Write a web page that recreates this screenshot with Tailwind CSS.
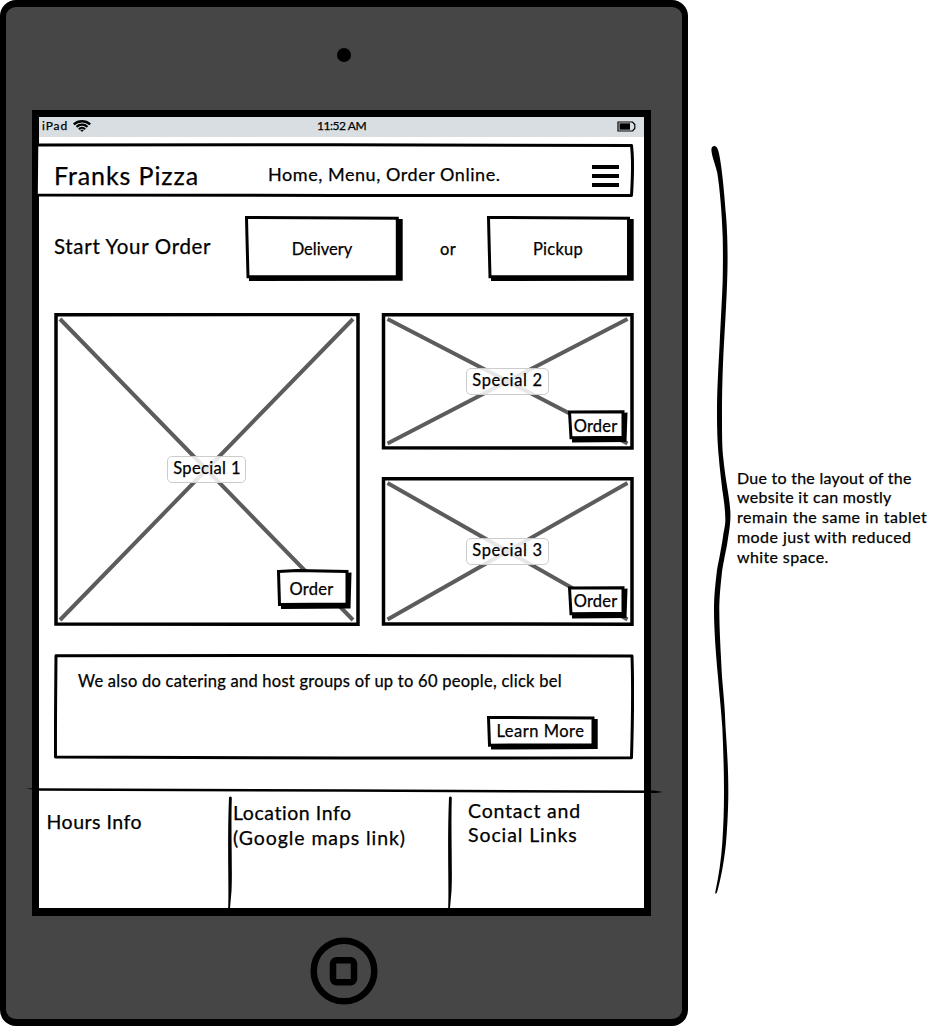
<!DOCTYPE html>
<html lang="en">
<head>
<meta charset="utf-8">
<title>Franks Pizza – tablet wireframe</title>
<script src="https://cdn.jsdelivr.net/npm/@tailwindcss/browser@4"></script>
</head>
<body class="flex h-[1032px] w-[936px] overflow-hidden bg-white font-[Lato,'Open_Sans',sans-serif] text-black [-webkit-text-stroke:0.25px_black]">

<!-- Tablet -->
<div class="flex h-[1026px] w-[688px] shrink-0 flex-col rounded-[16px] border-x-6 border-y-7 border-black bg-[#464646]">
  <div class="flex h-[103px] shrink-0 items-center justify-center pb-[7px]">
    <div class="size-[14px] rounded-full bg-black"></div>
  </div>

  <!-- Screen -->
  <main class="ml-[26px] flex h-[806px] w-[619px] shrink-0 flex-col border-t-7 border-r-7 border-b-8 border-l-7 border-black bg-white">
    <div class="grid h-5 shrink-0 grid-cols-3 items-center bg-[#d8dee2] pr-2 pl-[3px] text-[12px] leading-[16px]">
      <div class="flex items-center gap-[5px] pb-[2px]">
        <span class="tracking-[0.88px]">iPad</span>
        <svg class="h-3 w-[18px]" viewBox="0 0 18 12" fill="none" stroke="#000"><path d="M.8 4.300C5.500 .2 12.500 .2 17.200 4.300" stroke-width="2.400"/><path d="M3.500 6.800C6.700 4 11.300 4 14.500 6.800" stroke-width="2.200"/><path d="M5.800 9.100C7.800 7.400 10.200 7.400 12.200 9.100" stroke-width="2.100"/><path d="M7 9.800H11L9 12Z" fill="#000" stroke="none"/></svg>
      </div>
      <span class="pb-[2px] pl-[5px] text-center tracking-[-0.45px] whitespace-nowrap">11:52 AM</span>
      <svg class="mb-[2px] ml-auto h-[11px] w-[19px]" viewBox="0 0 19 11"><path d="M1 1H15.500L17.800 3.500V7.500L15.500 10H1Z" fill="none" stroke="#000" stroke-width="1.200"/><rect x="2.500" y="2.300" width="10.500" height="6.400"/></svg>
    </div>

    <!-- Site header -->
    <header class="relative mt-[6px] -ml-[3px] flex h-[54px] w-[598px] shrink-0 items-center pt-[9px] pl-[18px]">
      <svg class="absolute inset-0 h-[54px] w-[598px]" viewBox="0 0 598 54"><path d="M.8 2L300 1.800L595.500 2.500C597 15 596.500 36 595.500 52.500L300 52.500L.3 52Z" fill="#fff" stroke="#000" stroke-width="3" stroke-linejoin="round"/></svg>
      <h1 class="relative w-[214px] text-[25px] leading-[30px] tracking-[0.9px] whitespace-nowrap">Franks Pizza</h1>
      <nav class="relative mb-[2px] w-[324px] text-[18px] leading-[24px] tracking-[0.55px] whitespace-nowrap">Home, Menu, Order Online.</nav>
      <div class="relative mt-[3px] flex w-[27px] flex-col gap-[5px]">
        <i class="h-[4px] bg-black"></i><i class="h-[4px] bg-black"></i><i class="h-[4px] bg-black"></i>
      </div>
    </header>

    <!-- Start order -->
    <section class="mt-[19px] flex h-[65px] shrink-0 items-center pl-[15px] text-[16.5px] leading-[20px]">
      <h2 class="mb-[6px] w-[191px] text-[20.5px] leading-[26px] tracking-[0.68px] whitespace-nowrap">Start Your Order</h2>
      <button class="relative h-[65px] w-[158px] pr-[4px] tracking-[0.03px]">
        <svg class="absolute inset-0" width="158" height="65" viewBox="0 0 158 65"><path d="M4 59H151.500V3H157.700V64.700L4 65Z"/><path d="M1.500 1.500L60 1.700L152.300 2.200V60.400L3 60.800C2.500 45 2 22 1.500 1.500Z" fill="#fff" stroke="#000" stroke-width="3"/></svg>
        <span class="relative">Delivery</span>
      </button>
      <span class="w-[84px] pt-[1px] pl-[37px] tracking-[0.31px]">or</span>
      <button class="relative h-[65px] w-[147px] pr-[5px] tracking-[0.24px]">
        <svg class="absolute inset-0" width="147" height="65" viewBox="0 0 147 65"><path d="M4 59H140V3H146.700V64.700L4 65Z"/><path d="M1.500 1.500L60 1.700L141.500 2.200V60.400L3 60.800C2.500 45 2 22 1.500 1.500Z" fill="#fff" stroke="#000" stroke-width="3"/></svg>
        <span class="relative">Pickup</span>
      </button>
    </section>

    <!-- Specials -->
    <section class="mt-[32px] ml-[15px] grid h-[313px] w-[580px] shrink-0 grid-cols-[306px_253px] justify-between text-[16.5px] leading-[20px]">
      <article class="relative flex h-[313px] items-center justify-center">
        <svg class="absolute inset-0" width="306" height="313" viewBox="0 0 306 313"><path d="M6 6L299 307M299 6L6 307" stroke="#5c5c5e" stroke-width="4"/><path d="M2 1.800L304 1.500L304 311.300L2 311Z" fill="none" stroke="#000" stroke-width="3.500"/></svg>
        <span class="relative mr-[1px] flex h-[26.500px] w-[79px] items-center justify-center rounded-[5px] border border-[#ccc] bg-white/85 pb-[3px] pl-[1px] tracking-[0.36px]">Special 1</span>
        <button class="absolute top-[256px] left-[223px] h-[40px] w-[75px] pr-[6px] pb-[1px] tracking-[0.26px]">
          <svg class="absolute inset-0" width="75" height="40" viewBox="0 0 75 40"><path d="M4 34H68V4L74.500 3.500L73.500 39.500L4 40Z"/><path d="M1.500 2.500L20 1.500L70 2.500V35L2.500 35.500Z" fill="#fff" stroke="#000" stroke-width="3"/></svg>
          <span class="relative">Order</span>
        </button>
      </article>
      <div class="flex flex-col justify-between">
        <article class="relative flex h-[136.500px] items-center justify-center">
          <svg class="absolute inset-0" width="253" height="137" viewBox="0 0 253 137"><path d="M6.500 6L246.500 130.500M246.500 6L6.500 130.500" stroke="#5c5c5e" stroke-width="4"/><path d="M2.500 1.800L251 1.500L251 135L2.500 134.800Z" fill="none" stroke="#000" stroke-width="3.500"/></svg>
          <span class="relative flex h-[26.500px] w-[83px] items-center justify-center rounded-[5px] border border-[#ccc] bg-white/85 pb-[3px] tracking-[0.68px]">Special 2</span>
          <button class="absolute top-[97px] left-[187px] h-[33px] w-[60px] pr-[5px] pb-[2px] tracking-[0.2px]">
            <svg class="absolute inset-0" width="60" height="33" viewBox="0 0 60 33"><path d="M4 27H53V3L59.500 2.500L58.500 32L4 32.500Z"/><path d="M1.500 2L55 1.800V27.300L3 27.800Z" fill="#fff" stroke="#000" stroke-width="3"/></svg>
            <span class="relative">Order</span>
          </button>
        </article>
        <article class="relative flex h-[149px] items-center justify-center">
          <svg class="absolute inset-0" width="253" height="149" viewBox="0 0 253 149"><path d="M6.500 6L246.500 142.500M246.500 6L6.500 142.500" stroke="#5c5c5e" stroke-width="4"/><path d="M2.500 1.800L251 1.500L251 147.200L2.500 147Z" fill="none" stroke="#000" stroke-width="3.500"/></svg>
          <span class="relative flex h-[26.500px] w-[83px] items-center justify-center rounded-[5px] border border-[#ccc] bg-white/85 pb-[3px] tracking-[0.68px]">Special 3</span>
          <button class="absolute top-[108.500px] left-[187px] h-[33px] w-[60px] pr-[5px] pb-[2px] tracking-[0.2px]">
            <svg class="absolute inset-0" width="60" height="33" viewBox="0 0 60 33"><path d="M4 27H53V3L59.500 2.500L58.500 32L4 32.500Z"/><path d="M1.500 2L55 1.800V27.300L3 27.800Z" fill="#fff" stroke="#000" stroke-width="3"/></svg>
            <span class="relative">Order</span>
          </button>
        </article>
      </div>
    </section>

    <!-- Catering -->
    <section class="relative mt-[28px] ml-[15px] flex h-[106px] w-[580px] shrink-0 flex-col pt-[16.500px] pl-[24px] text-[16.5px] leading-[20px]">
      <svg class="absolute inset-0" width="580" height="106" viewBox="0 0 580 106"><path d="M2 1.700L290 1.500L578 2C579 30 578.500 70 577.500 103.800L290 104L1.500 103C1.300 70 1.700 40 2 1.700Z" fill="none" stroke="#000" stroke-width="3" stroke-linejoin="round"/></svg>
      <p class="tracking-[0.26px] whitespace-nowrap">We also do catering and host groups of up to 60 people, click bel</p>
      <button class="relative mt-[25px] ml-[409px] h-[34px] w-[111px] pr-[4px] pb-[3px] tracking-[0.5px] whitespace-nowrap">
        <svg class="absolute inset-0" width="111" height="34" viewBox="0 0 111 34"><path d="M4 28H105V3H110.700V33L4 33.500Z"/><path d="M1.500 1.500L106 2V28.700L2.500 29.200Z" fill="#fff" stroke="#000" stroke-width="3"/></svg>
        <span class="relative">Learn More</span>
      </button>
    </section>

    <!-- Footer -->
    <svg class="relative mt-[27px] -ml-[13px] h-[7px] w-[637px] shrink-0" viewBox="0 0 637 7"><path d="M0 1.500L8 1.300L320 2.200L628 3.500L637 5L630 6L320 4.800L14 3.800Z"/></svg>
    <footer class="flex min-h-0 flex-1 text-[19.5px] leading-[25px] whitespace-nowrap">
      <div class="w-[189px] pt-[14.500px] pl-[7.500px] tracking-[0.5px]">Hours Info</div>
      <svg class="mt-[2px] h-[112px] w-[5px] shrink-0" viewBox="0 0 5 112"><path d="M1 1.500Q2.500 -.3 3.800 1.500C2.800 35 4.600 75 3.500 95L2 112H.2C1 85 -.9 50 1 1.500Z"/></svg>
      <div class="w-[215px] pt-[6px]"><span class="block tracking-[0.55px]">Location Info</span><span class="block tracking-[0.92px]">(Google maps link)</span></div>
      <svg class="mt-[2px] h-[112px] w-[5px] shrink-0" viewBox="0 0 5 112"><path d="M1 1.500Q2.500 -.3 3.800 1.500C2.800 35 4.600 75 3.500 95L2 112H.2C1 85 -.9 50 1 1.500Z"/></svg>
      <div class="pt-[5px] pl-[15px] leading-[24px]"><span class="block tracking-[0.81px]">Contact and</span><span class="block tracking-[0.9px]">Social Links</span></div>
    </footer>
  </main>

  <!-- Home button -->
  <div class="flex flex-1 justify-center pt-[21px]">
    <svg class="size-[68px]" viewBox="0 0 68 68" fill="none" stroke="#000"><circle cx="34" cy="34" r="30.300" stroke-width="6.500"/><rect x="23" y="23.200" width="21" height="22" rx="3.500" stroke-width="6.500"/></svg>
  </div>
</div>

<!-- Brace and note -->
<svg class="mt-[140px] ml-[17px] h-[760px] w-[30px] shrink-0" viewBox="705 140 30 760"><path d="M711.500 151C711 147 713 146 714.500 146C717 146 718.500 150 719.500 156C722 168 724.500 195 726 215C728 240 727.800 265 727 285C726 310 725 325 724 343C722.500 370 722 395 722 413C722 435 722 448 723.500 460C725 475 727 485 728 492C730 505 730.800 512 730.300 520C730 527 728.500 535 727 545C725 555 723 565 722 572C720 590 719.300 600 719.300 610C719.500 635 721 655 722 677C724 700 725 710 725.500 727C727.500 755 728.500 775 728.300 797C728 815 727 832 726 843C724 862 721 878 717 892.500L715.500 894L715.300 892C719 875 721 860 722.300 843C723.500 825 724 810 724 793C724 770 723.300 750 722.300 727C721 708 719 690 718 677C716 655 714 630 714 610C714 595 715.500 583 717 570C718.500 562 722 545 723.500 533C725 526 725.500 522 725.300 518C725 507 723.500 498 722.300 490C721 478 719.500 467 718.800 457C717.500 443 717 430 717 413C717 390 718.500 365 719.700 343C720.500 325 722 300 722.700 280C723 265 723 250 722.700 237C722 215 720 190 717.300 173C715 163 712 157 711.500 151Z"/></svg>
<p class="mt-[467.500px] ml-[2px] text-[16px] leading-[19.8px] whitespace-nowrap">
  <span class="block tracking-[0.26px]">Due to the layout of the</span>
  <span class="block tracking-[0.31px]">website it can mostly</span>
  <span class="block tracking-[0.53px]">remain the same in tablet</span>
  <span class="block tracking-[0.44px]">mode just with reduced</span>
  <span class="block tracking-[0.38px]">white space.</span>
</p>
</body>
</html>
